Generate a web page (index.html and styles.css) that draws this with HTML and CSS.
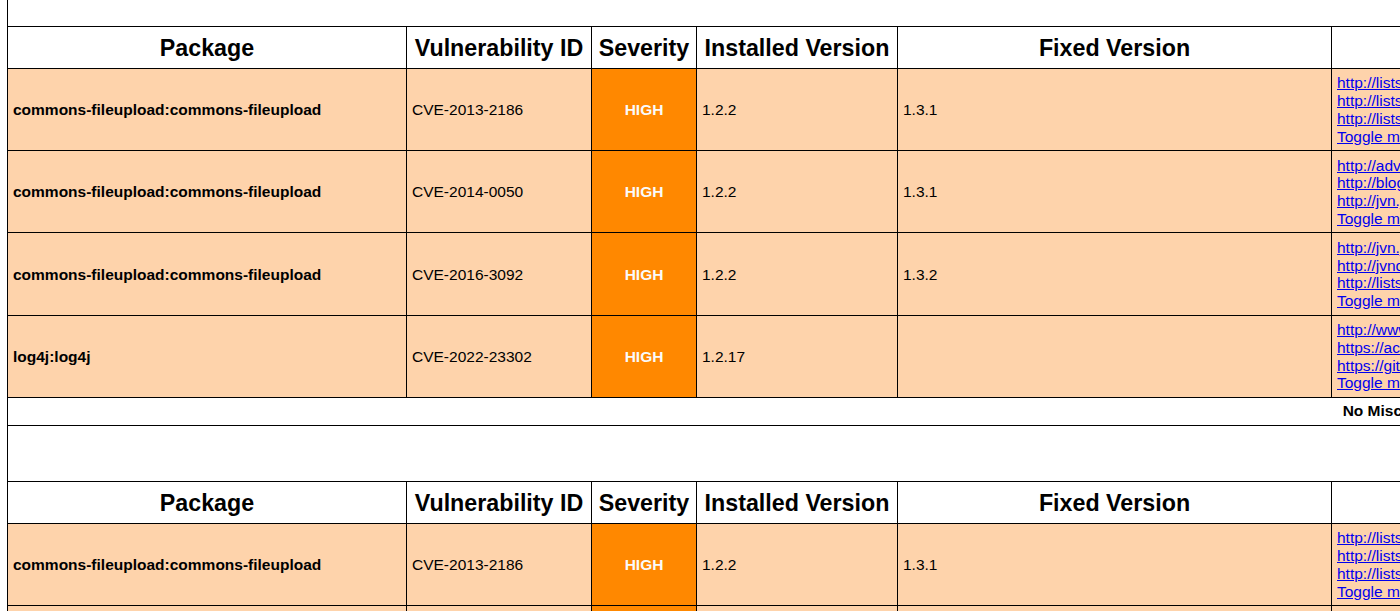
FILE: index.html
```html
<!DOCTYPE html>
<html lang="en">
<head>
<meta charset="utf-8">
<title>Trivy Report</title>
<link rel="stylesheet" href="styles.css">
</head>
<body>
<table class="report">
  <colgroup>
    <col class="c-pkg">
    <col class="c-vid">
    <col class="c-sev">
    <col class="c-inst">
    <col class="c-fix">
    <col class="c-links">
  </colgroup>
  <tr class="group-header"><th colspan="6">jar</th></tr>
  <tr class="sub-header">
    <th>Package</th>
    <th>Vulnerability ID</th>
    <th>Severity</th>
    <th>Installed Version</th>
    <th>Fixed Version</th>
    <th>Links</th>
  </tr>
  <tr class="severity-HIGH">
    <td class="pkg-name">commons-fileupload:commons-fileupload</td>
    <td>CVE-2013-2186</td>
    <td class="severity">HIGH</td>
    <td class="pkg-version">1.2.2</td>
    <td>1.3.1</td>
    <td class="links">
      <a href="#">http://lists.opensuse.org/opensuse-updates/2013-11/msg00013.html</a>
      <a href="#">http://lists.opensuse.org/opensuse-updates/2013-11/msg00015.html</a>
      <a href="#">http://lists.opensuse.org/opensuse-updates/2013-11/msg00016.html</a>
      <a href="#" class="toggle-more-links">Toggle more links</a>
    </td>
  </tr>
  <tr class="severity-HIGH">
    <td class="pkg-name">commons-fileupload:commons-fileupload</td>
    <td>CVE-2014-0050</td>
    <td class="severity">HIGH</td>
    <td class="pkg-version">1.2.2</td>
    <td>1.3.1</td>
    <td class="links">
      <a href="#">http://advisories.mageia.org/MGASA-2014-0110.html</a>
      <a href="#">http://blog.spiderlabs.com/2014/02/cve-2014-0050-exploit-with-boundaries.html</a>
      <a href="#">http://jvn.jp/en/jp/JVN14876762/index.html</a>
      <a href="#" class="toggle-more-links">Toggle more links</a>
    </td>
  </tr>
  <tr class="severity-HIGH">
    <td class="pkg-name">commons-fileupload:commons-fileupload</td>
    <td>CVE-2016-3092</td>
    <td class="severity">HIGH</td>
    <td class="pkg-version">1.2.2</td>
    <td>1.3.2</td>
    <td class="links">
      <a href="#">http://jvn.jp/en/jp/JVN89379547/index.html</a>
      <a href="#">http://jvndb.jvn.jp/jvndb/JVNDB-2016-000121</a>
      <a href="#">http://lists.opensuse.org/opensuse-security-announce/2016-07/msg00025.html</a>
      <a href="#" class="toggle-more-links">Toggle more links</a>
    </td>
  </tr>
  <tr class="severity-HIGH">
    <td class="pkg-name">log4j:log4j</td>
    <td>CVE-2022-23302</td>
    <td class="severity">HIGH</td>
    <td class="pkg-version">1.2.17</td>
    <td></td>
    <td class="links">
      <a href="#">http://www.openwall.com/lists/oss-security/2022/01/18/3</a>
      <a href="#">https://access.redhat.com/security/cve/CVE-2022-23302</a>
      <a href="#">https://github.com/advisories/GHSA-w9p3-5cr8-m3jj</a>
      <a href="#" class="toggle-more-links">Toggle more links</a>
    </td>
  </tr>
  <tr class="note-row"><th colspan="6">No Misconfigurations found</th></tr>
  <tr class="group-header"><th colspan="6">jar</th></tr>
  <tr class="sub-header">
    <th>Package</th>
    <th>Vulnerability ID</th>
    <th>Severity</th>
    <th>Installed Version</th>
    <th>Fixed Version</th>
    <th>Links</th>
  </tr>
  <tr class="severity-HIGH">
    <td class="pkg-name">commons-fileupload:commons-fileupload</td>
    <td>CVE-2013-2186</td>
    <td class="severity">HIGH</td>
    <td class="pkg-version">1.2.2</td>
    <td>1.3.1</td>
    <td class="links">
      <a href="#">http://lists.opensuse.org/opensuse-updates/2013-11/msg00013.html</a>
      <a href="#">http://lists.opensuse.org/opensuse-updates/2013-11/msg00015.html</a>
      <a href="#">http://lists.opensuse.org/opensuse-updates/2013-11/msg00016.html</a>
      <a href="#" class="toggle-more-links">Toggle more links</a>
    </td>
  </tr>
  <tr class="severity-HIGH">
    <td class="pkg-name">commons-fileupload:commons-fileupload</td>
    <td>CVE-2014-0050</td>
    <td class="severity">HIGH</td>
    <td class="pkg-version">1.2.2</td>
    <td>1.3.1</td>
    <td class="links">
      <a href="#">http://advisories.mageia.org/MGASA-2014-0110.html</a>
      <a href="#">http://blog.spiderlabs.com/2014/02/cve-2014-0050-exploit-with-boundaries.html</a>
      <a href="#">http://jvn.jp/en/jp/JVN14876762/index.html</a>
      <a href="#" class="toggle-more-links">Toggle more links</a>
    </td>
  </tr>
</table>
</body>
</html>
```

FILE: styles.css
```css
html, body {
  overflow: hidden;
}
body {
  margin: 0 0 0 7px;
  background: #ffffff;
  color: #000000;
  font-family: "Liberation Sans", Arial, Helvetica, sans-serif;
  font-size: 15.5px;
}
.report {
  border-collapse: collapse;
  table-layout: fixed;
  width: 2876px;
  margin-top: -30px;
}
.c-pkg { width: 399px; }
.c-vid { width: 185px; }
.c-sev { width: 105px; }
.c-inst { width: 201px; }
.c-fix { width: 434px; }
.c-links { width: 1552px; }

.report th,
.report td {
  border: 1px solid #000000;
  white-space: nowrap;
  overflow: hidden;
}
.report td {
  padding: 5.5px 5px 4.5px;
  line-height: 17.8px;
  text-align: left;
}
.group-header th {
  font-size: 31px;
  line-height: 35.6px;
  padding: 9.7px 5px;
}
.sub-header th {
  font-size: 23.25px;
  line-height: 27px;
  padding: 8px 5px 6px;
}
.note-row th {
  font-size: 15.5px;
  line-height: 17.8px;
  padding: 4.6px 5px;
}
.severity-HIGH {
  background-color: #fed3ab;
}
.severity-HIGH .severity {
  background-color: #ff8800;
  color: #fafafa;
  text-align: center;
  font-weight: bold;
}
.pkg-name {
  font-weight: bold;
}
.links a {
  display: block;
  color: #0000ee;
  text-decoration: underline;
}
```
